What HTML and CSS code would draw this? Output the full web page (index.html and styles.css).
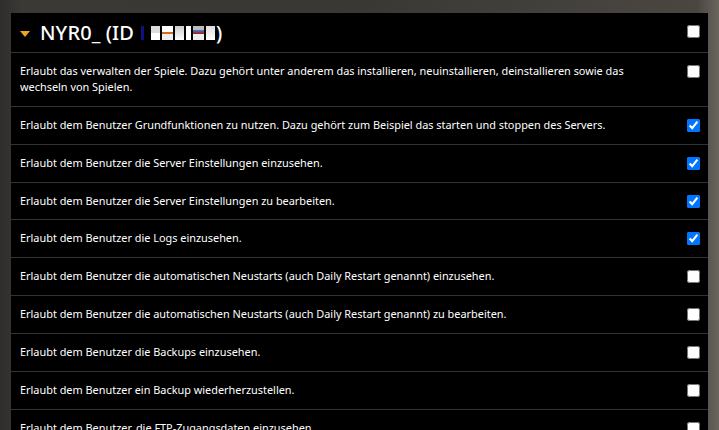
FILE: index.html
```html
<!DOCTYPE html>
<html lang="de">
<head>
<meta charset="utf-8">
<link rel="stylesheet" href="styles.css">
</head>
<body>
<div class="page">
  <section class="panel">
    <header class="panel-head">
      <h1 class="title"><span class="caret"></span>NYR0_ (ID <span class="redact"><i class="b1"></i><i class="w1"></i><i class="w2"></i><i class="w3"></i><i class="w4"></i><i class="w5"></i><i class="w6"></i></span>)</h1>
      <input type="checkbox" class="cb">
    </header>
    <div class="row"><p>Erlaubt das verwalten der Spiele. Dazu gehört unter anderem das installieren, neuinstallieren, deinstallieren sowie das wechseln von Spielen.</p><input type="checkbox" class="cb"></div>
    <div class="row"><p>Erlaubt dem Benutzer Grundfunktionen zu nutzen. Dazu gehört zum Beispiel das starten und stoppen des Servers.</p><input type="checkbox" class="cb" checked></div>
    <div class="row"><p>Erlaubt dem Benutzer die Server Einstellungen einzusehen.</p><input type="checkbox" class="cb" checked></div>
    <div class="row"><p>Erlaubt dem Benutzer die Server Einstellungen zu bearbeiten.</p><input type="checkbox" class="cb" checked></div>
    <div class="row"><p>Erlaubt dem Benutzer die Logs einzusehen.</p><input type="checkbox" class="cb" checked></div>
    <div class="row"><p>Erlaubt dem Benutzer die automatischen Neustarts (auch Daily Restart genannt) einzusehen.</p><input type="checkbox" class="cb"></div>
    <div class="row"><p>Erlaubt dem Benutzer die automatischen Neustarts (auch Daily Restart genannt) zu bearbeiten.</p><input type="checkbox" class="cb"></div>
    <div class="row"><p>Erlaubt dem Benutzer die Backups einzusehen.</p><input type="checkbox" class="cb"></div>
    <div class="row"><p>Erlaubt dem Benutzer ein Backup wiederherzustellen.</p><input type="checkbox" class="cb"></div>
    <div class="row"><p>Erlaubt dem Benutzer, die FTP-Zugangsdaten einzusehen.</p><input type="checkbox" class="cb"></div>
  </section>
</div>
</body>
</html>
```
FILE: styles.css
```css
html, body {
  margin: 0;
  height: 100%;
  overflow: hidden;
}
body {
  background: linear-gradient(90deg, #2e2d2b 0%, #3b3936 3%, #3a3835 50%, #4a4741 97%, #6a665e 100%);
  font-family: "Noto Sans", "Open Sans", sans-serif;
  color: #fff;
}
.page {
  padding: 13px 11px 0 11px;
}
.panel {
  background: #000;
  width: 697px;
}
.panel-head {
  display: flex;
  align-items: flex-start;
  justify-content: space-between;
  height: 40px;
  border-bottom: 1px solid #333;
  box-sizing: border-box;
  padding: 0 8px 0 9px;
}
.title {
  margin: 0;
  font-size: 20px;
  font-weight: 500;
  line-height: 40px;
  display: flex;
  align-items: center;
  letter-spacing: 0.1px;
}
.caret {
  width: 0;
  height: 0;
  border-left: 5px solid transparent;
  border-right: 5px solid transparent;
  border-top: 6px solid #f0a31c;
  margin-right: 10px;
  margin-top: 2px;
}
.redact {
  display: inline-flex;
  align-items: center;
  gap: 2px;
  margin-left: 7px;
  margin-right: 1px;
  height: 14px;
}
.redact i {
  display: block;
  height: 14px;
  background: #eee;
}
.redact .b1 { width: 3px; background: #101080; margin-right: 5px; }
.redact .w1 { width: 9px; background: linear-gradient(#ddd 50%, #fff 50%); }
.redact .w2 { width: 11px; background: linear-gradient(180deg, #fff 40%, #d46a1a 40%, #d46a1a 55%, #eee 55%); }
.redact .w3 { width: 9px; background: linear-gradient(#ccc, #fff); }
.redact .w4 { width: 5px; background: #fff; }
.redact .w5 { width: 11px; background: linear-gradient(180deg, #bbb 30%, #3b7fd0 30%, #a02020 55%, #eee 55%); }
.redact .w6 { width: 9px; background: linear-gradient(#ddd, #fff); }
.cb {
  margin: 12px 0 0 0;
  width: 13px;
  height: 13px;
  flex: none;
}
.row {
  display: flex;
  align-items: flex-start;
  justify-content: space-between;
  border-bottom: 1px solid #333;
  padding: 10px 8px 10.85px 9px;
}
.row p {
  flex: 1;
  margin: 0;
  font-size: 10.9px;
  line-height: 16px;
  max-width: 640px;
}
.row .cb {
  margin-top: 2px;
}
```
